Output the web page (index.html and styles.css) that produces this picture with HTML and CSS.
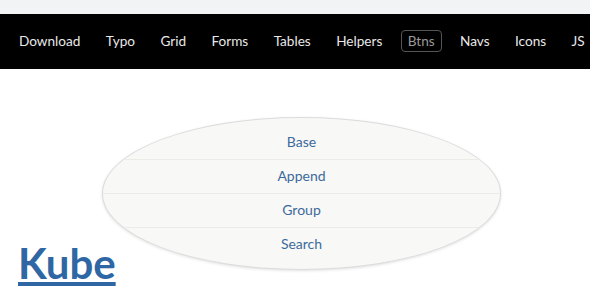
FILE: index.html
```html
<!DOCTYPE html>
<html lang="en">
<head>
    <meta charset="utf-8" />
    <link rel="stylesheet" href="styles.css">
    <title>Kube</title>
</head>
<body>
    <div id="topStrip"></div>
    <div id="navBar">
        <a class="nav-link" href="#">Download</a>
        <a class="nav-link" href="#">Typo</a>
        <a class="nav-link" href="#">Grid</a>
        <a class="nav-link" href="#">Forms</a>
        <a class="nav-link" href="#">Tables</a>
        <a class="nav-link" href="#">Helpers</a>
        <a class="nav-link active" href="#">Btns</a>
        <a class="nav-link" href="#">Navs</a>
        <a class="nav-link" href="#">Icons</a>
        <a class="nav-link" href="#">JS</a>
    </div>
    <div id="content">
        <h1 class="title"><a href="#">Kube</a></h1>
        <ul class="dropdown">
            <li><a href="#">Base</a></li>
            <li><a href="#">Append</a></li>
            <li><a href="#">Group</a></li>
            <li><a href="#">Search</a></li>
        </ul>
    </div>
</body>
</html>
```
FILE: styles.css
```css
body {
    margin: 0;
    background: #fff;
    font-family: 'Lato', 'Liberation Sans', sans-serif;
}

#topStrip {
    height: 14px;
    background: #f2f3f5;
}

#navBar {
    display: flex;
    align-items: center;
    gap: 11.4px;
    height: 55px;
    padding-left: 12px;
    padding-bottom: 2px;
    box-sizing: border-box;
    background: #000;
    white-space: nowrap;
}

.nav-link {
    color: #e8e8e8;
    text-decoration: none;
    font-size: 13.6px;
    line-height: 18px;
    padding: 1px 6px;
    border: 1px solid transparent;
    border-radius: 4px;
}

    .nav-link.active {
        color: #9a9a9a;
        border-color: #555;
    }

#content {
    position: relative;
    padding: 170px 18px 0;
}

.title {
    margin: 0;
    font-size: 42px;
    line-height: 48px;
    font-weight: 700;
}

    .title a {
        color: #2e67a3;
    }

.dropdown {
    position: absolute;
    left: 102px;
    top: 48px;
    width: 399px;
    height: 153px;
    margin: 0;
    padding: 8px 0 0;
    box-sizing: border-box;
    list-style: none;
    background: #f8f8f6;
    border: 1px solid #dcdcdc;
    border-radius: 50%;
    box-shadow: 0 1px 3px rgba(0, 0, 0, 0.12);
    overflow: hidden;
}

    .dropdown li {
        height: 34px;
        line-height: 30px;
        text-align: center;
        border-bottom: 1px solid #ebebe8;
        box-sizing: border-box;
    }

        .dropdown li:last-child {
            border-bottom: none;
        }

    .dropdown a {
        color: #3c6a9c;
        font-size: 14px;
        text-decoration: none;
    }
```
